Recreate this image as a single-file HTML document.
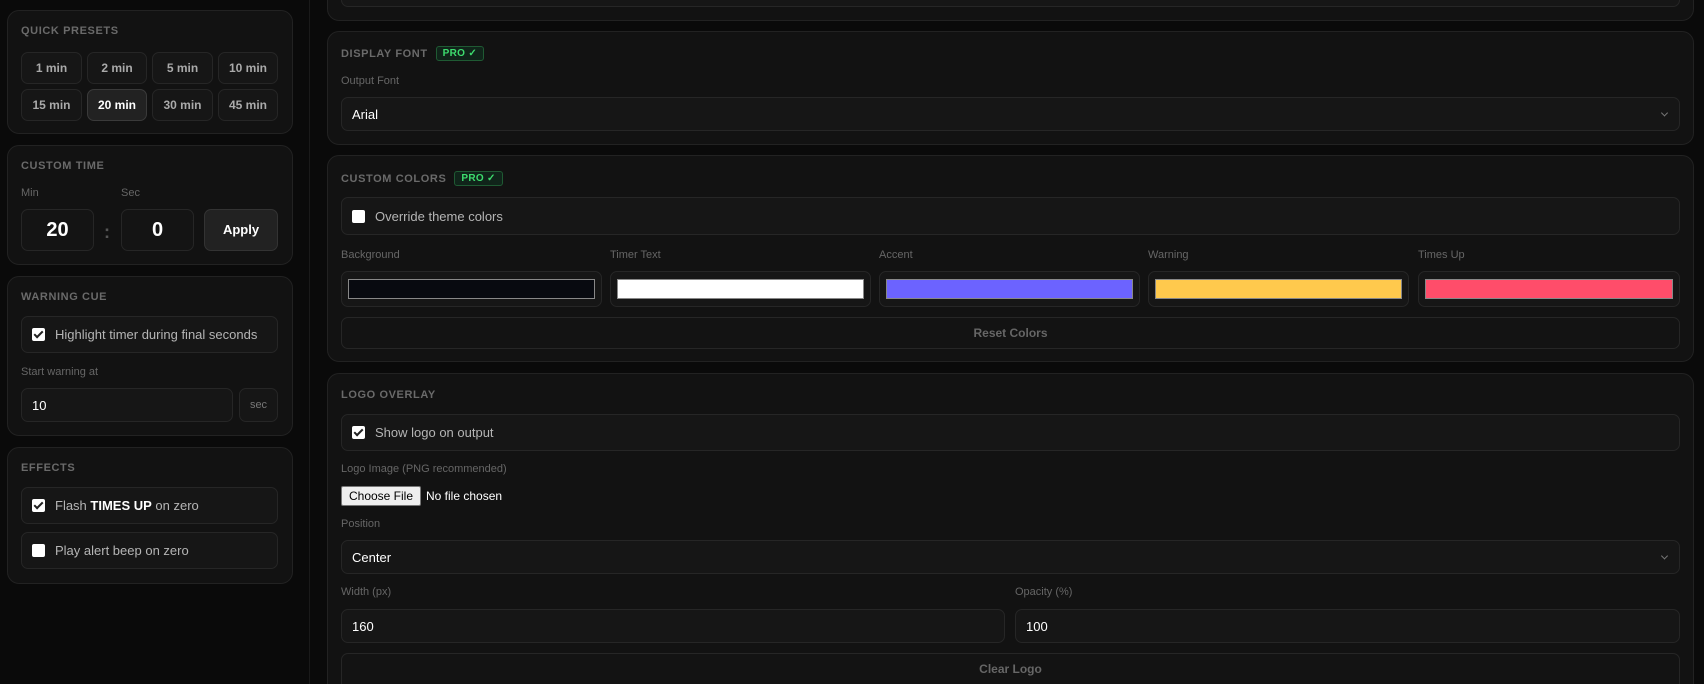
<!DOCTYPE html>
<html style="width:1704px;height:684px;overflow:hidden"><head><meta charset="utf-8"><style>
*{box-sizing:border-box;margin:0;padding:0}
body{width:1704px;height:684px;background:#0a0a0a;font-family:"Liberation Sans",sans-serif;position:relative;overflow:hidden;color:#ccc}
.a{position:absolute}
.p{position:absolute;background:#121212;border:1px solid #222;border-radius:12px}
.t{position:absolute;font-size:11px;font-weight:bold;letter-spacing:.6px;color:#6a6a6a}
.l{position:absolute;font-size:11px;color:#666}
.b{position:absolute;background:#161616;border:1px solid #262626;border-radius:7px}
.btn{position:absolute;background:#161616;border:1px solid #262626;border-radius:7px;font-size:12px;font-weight:bold;color:#aaa;text-align:center;line-height:30px}
.row{position:absolute;background:#161616;border:1px solid #262626;border-radius:7px;font-size:13px;color:#b5b5b5;padding-left:10px;display:flex;align-items:center}
.cb{width:13px;height:13px;background:#fff;border-radius:2px;margin-right:10px;position:relative;flex:none}
.cb.on::after{content:"";position:absolute;left:4px;top:1px;width:3px;height:7px;border:solid #222;border-width:0 2px 2px 0;transform:rotate(45deg)}
.pro{display:inline-block;margin-left:8px;font-size:10px;color:#3ddc6e;border:1px solid #1f5a33;background:#10241a;border-radius:3px;padding:1px 6px;letter-spacing:.3px;vertical-align:1px}
.sel{position:absolute;background:#161616;border:1px solid #262626;border-radius:7px;font-size:13px;color:#fff;padding-left:10px;display:flex;align-items:center}
.chev{position:absolute;right:12px;top:50%;width:5px;height:5px;border:solid #777;border-width:0 1px 1px 0;transform:translateY(-70%) rotate(45deg)}
.sw{position:absolute;left:6px;right:6px;top:7px;height:20px;border:1px solid #888}
</style></head><body>
<div class="a" style="left:309px;top:0;width:1px;height:684px;background:#1a1a1a"></div>

<div class="p" style="left:7px;top:10px;width:286px;height:124px"></div>
<div class="t" style="left:21px;top:25px">QUICK PRESETS</div>
<div class="btn" style="left:21px;top:52px;width:61px">1 min</div>
<div class="btn" style="left:87px;top:52px;width:60px">2 min</div>
<div class="btn" style="left:152px;top:52px;width:61px">5 min</div>
<div class="btn" style="left:218px;top:52px;width:60px">10 min</div>
<div class="btn" style="left:21px;top:89px;width:61px">15 min</div>
<div class="btn" style="left:87px;top:89px;width:60px;background:#222;border-color:#3a3a3a;color:#fff">20 min</div>
<div class="btn" style="left:152px;top:89px;width:61px">30 min</div>
<div class="btn" style="left:218px;top:89px;width:60px">45 min</div>

<div class="p" style="left:7px;top:145px;width:286px;height:120px"></div>
<div class="t" style="left:21px;top:160px">CUSTOM TIME</div>
<div class="l" style="left:21px;top:187px">Min</div>
<div class="l" style="left:121px;top:187px">Sec</div>
<div class="b" style="left:21px;top:209px;width:73px;height:42px;background:#141414;font-size:20px;font-weight:bold;color:#fff;text-align:center;line-height:40px">20</div>
<div class="a" style="left:104px;top:222px;font-size:18px;font-weight:bold;color:#555">:</div>
<div class="b" style="left:121px;top:209px;width:73px;height:42px;background:#141414;font-size:20px;font-weight:bold;color:#fff;text-align:center;line-height:40px">0</div>
<div class="b" style="left:204px;top:209px;width:74px;height:42px;background:#222;border-color:#333;font-size:13px;font-weight:bold;color:#fff;text-align:center;line-height:40px">Apply</div>

<div class="p" style="left:7px;top:276px;width:286px;height:160px"></div>
<div class="t" style="left:21px;top:291px">WARNING CUE</div>
<div class="row" style="left:21px;top:316px;width:257px;height:37px"><span class="cb on"></span>Highlight timer during final seconds</div>
<div class="l" style="left:21px;top:366px">Start warning at</div>
<div class="sel" style="left:21px;top:388px;width:212px;height:34px">10</div>
<div class="b" style="left:239px;top:388px;width:39px;height:34px;font-size:11px;color:#777;text-align:center;line-height:32px">sec</div>

<div class="p" style="left:7px;top:447px;width:286px;height:137px"></div>
<div class="t" style="left:21px;top:462px">EFFECTS</div>
<div class="row" style="left:21px;top:487px;width:257px;height:37px"><span class="cb on"></span>Flash&nbsp;<b style="color:#fff">TIMES UP</b>&nbsp;on zero</div>
<div class="row" style="left:21px;top:532px;width:257px;height:37px"><span class="cb"></span>Play alert beep on zero</div>

<div class="p" style="left:327px;top:-20px;width:1367px;height:41px"></div>
<div class="b" style="left:341px;top:-20px;width:1339px;height:27px"></div>

<div class="p" style="left:327px;top:31px;width:1367px;height:114px"></div>
<div class="t" style="left:341px;top:46px">DISPLAY FONT<span class="pro">PRO ✓</span></div>
<div class="l" style="left:341px;top:75px">Output Font</div>
<div class="sel" style="left:341px;top:97px;width:1339px;height:34px">Arial<span class="chev"></span></div>

<div class="p" style="left:327px;top:155px;width:1367px;height:207px"></div>
<div class="t" style="left:341px;top:171px">CUSTOM COLORS<span class="pro">PRO ✓</span></div>
<div class="row" style="left:341px;top:197px;width:1339px;height:38px"><span class="cb"></span>Override theme colors</div>
<div class="l" style="left:341px;top:249px">Background</div>
<div class="l" style="left:610px;top:249px">Timer Text</div>
<div class="l" style="left:879px;top:249px">Accent</div>
<div class="l" style="left:1148px;top:249px">Warning</div>
<div class="l" style="left:1418px;top:249px">Times Up</div>
<div class="b" style="left:341px;top:271px;width:261px;height:36px"><div class="sw" style="background:#080a10"></div></div>
<div class="b" style="left:610px;top:271px;width:261px;height:36px"><div class="sw" style="background:#fff"></div></div>
<div class="b" style="left:879px;top:271px;width:261px;height:36px"><div class="sw" style="background:#6c63ff"></div></div>
<div class="b" style="left:1148px;top:271px;width:261px;height:36px"><div class="sw" style="background:#ffc94d"></div></div>
<div class="b" style="left:1418px;top:271px;width:262px;height:36px"><div class="sw" style="background:#ff4d6a"></div></div>
<div class="b" style="left:341px;top:317px;width:1339px;height:32px;background:#131313;font-size:12px;font-weight:bold;color:#666;text-align:center;line-height:30px">Reset Colors</div>

<div class="p" style="left:327px;top:373px;width:1367px;height:311px;border-bottom:none;border-bottom-left-radius:0;border-bottom-right-radius:0"></div>
<div class="t" style="left:341px;top:389px">LOGO OVERLAY</div>
<div class="row" style="left:341px;top:414px;width:1339px;height:37px"><span class="cb on"></span>Show logo on output</div>
<div class="l" style="left:341px;top:463px">Logo Image (PNG recommended)</div>
<div class="a" style="left:341px;top:486px;width:80px;height:20px;background:#efefef;border:1px solid #767676;border-radius:2px;font-size:12px;color:#000;text-align:center;line-height:18px">Choose File</div>
<div class="a" style="left:426px;top:489px;font-size:12px;color:#fff">No file chosen</div>
<div class="l" style="left:341px;top:518px">Position</div>
<div class="sel" style="left:341px;top:540px;width:1339px;height:34px">Center<span class="chev"></span></div>
<div class="l" style="left:341px;top:586px">Width (px)</div>
<div class="l" style="left:1015px;top:586px">Opacity (%)</div>
<div class="sel" style="left:341px;top:609px;width:664px;height:34px">160</div>
<div class="sel" style="left:1015px;top:609px;width:665px;height:34px">100</div>
<div class="b" style="left:341px;top:653px;width:1339px;height:31px;background:#131313;border-bottom:none;border-bottom-left-radius:0;border-bottom-right-radius:0;font-size:12px;font-weight:bold;color:#666;text-align:center;line-height:30px">Clear Logo</div>
</body></html>
